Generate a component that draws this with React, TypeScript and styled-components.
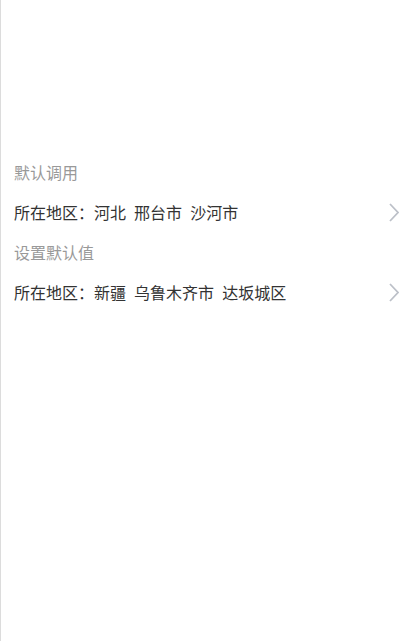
import React from "react";
import styled, { createGlobalStyle } from "styled-components";

const GlobalStyle = createGlobalStyle`
  html, body {
    margin: 0;
    padding: 0;
    background: #ffffff;
  }
  body {
    font-family: "Noto Sans CJK SC", "Noto Sans", sans-serif;
  }
`;

const Page = styled.div`
  min-height: 641px;
  box-sizing: border-box;
  border-left: 1px solid #dcdcdc;
  padding-top: 152px;
`;

const Section = styled.section`
  display: flex;
  flex-direction: column;
`;

const Caption = styled.div`
  height: 40px;
  line-height: 40px;
  padding-left: 13px;
  font-size: 16px;
  color: #999999;
`;

const Row = styled.div`
  height: 40px;
  display: flex;
  align-items: center;
  justify-content: space-between;
  padding: 0 13px 0 13px;
  font-size: 16px;
  color: #333333;
  cursor: pointer;
`;

const Label = styled.span`
  white-space: nowrap;
  word-spacing: 4.5px;
`;

const Arrow = styled.svg`
  width: 10px;
  height: 19px;
  flex: none;
`;

type Item = { caption: string; area: string };

const items: Item[] = [
  { caption: "默认调用", area: "河北 邢台市 沙河市" },
  { caption: "设置默认值", area: "新疆 乌鲁木齐市 达坂城区" },
];

function Chevron() {
  return (
    <Arrow viewBox="0 0 10 19">
      <polyline
        points="1,1 9,9.5 1,18"
        fill="none"
        stroke="#bcc0c8"
        strokeWidth="1.8"
      />
    </Arrow>
  );
}

export default function App() {
  return (
    <>
      <GlobalStyle />
      <Page>
        {items.map((it) => (
          <Section key={it.caption}>
            <Caption>{it.caption}</Caption>
            <Row>
              <Label>所在地区：{it.area}</Label>
              <Chevron />
            </Row>
          </Section>
        ))}
      </Page>
    </>
  );
}
